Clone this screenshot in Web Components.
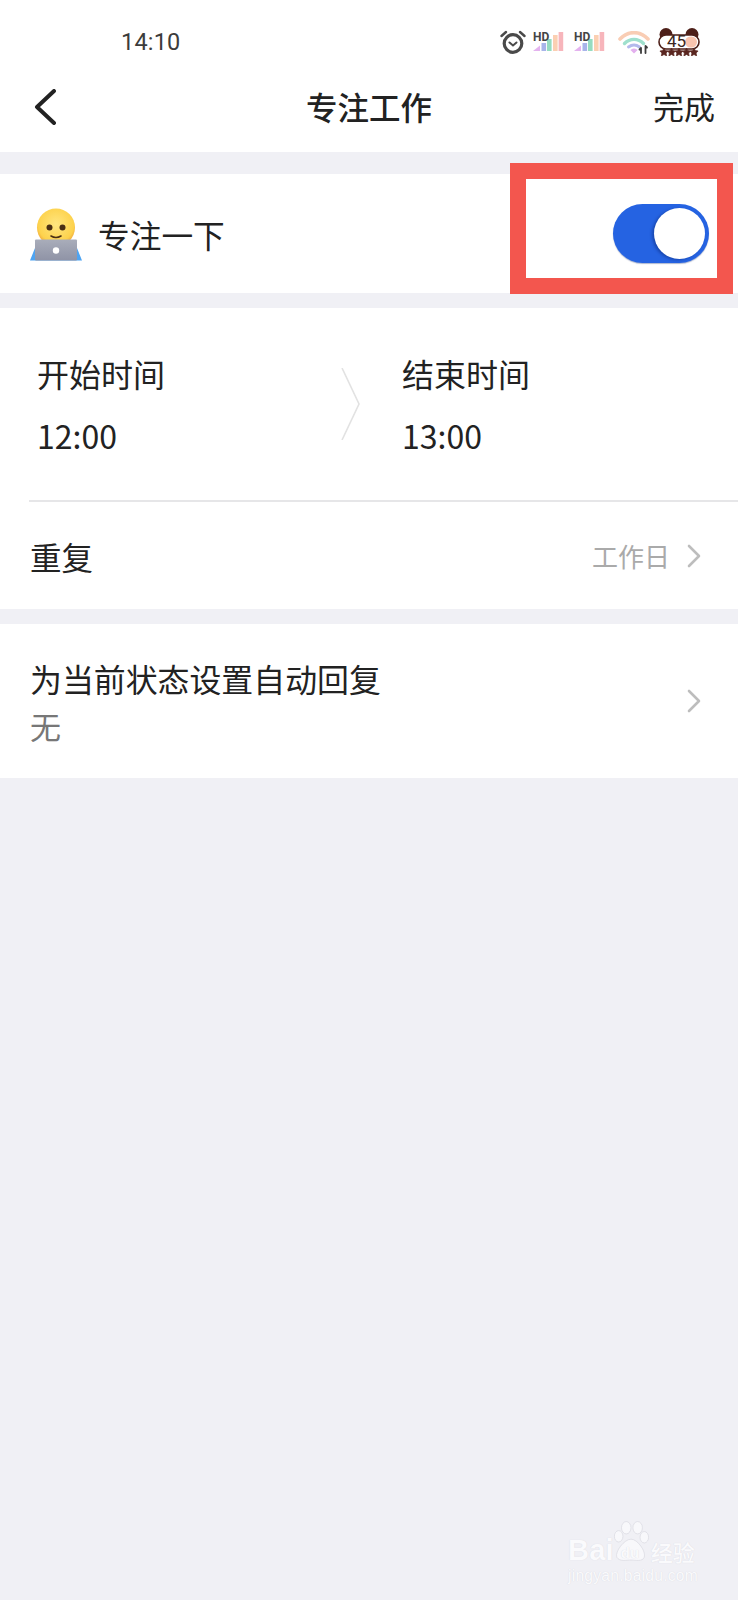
<!DOCTYPE html>
<html lang="zh">
<head>
<meta charset="utf-8">
<title>专注工作</title>
<style>
  html, body { margin: 0; padding: 0; background: #f0f0f5; }
  body { font-family: "Noto Sans CJK SC", "Noto Sans", sans-serif; color: #222; }
</style>
</head>
<body>
<focus-page>
  <status-bar time="14:10"></status-bar>
  <nav-bar title="专注工作" action="完成"></nav-bar>
  <focus-row label="专注一下"></focus-row>
  <time-range start="12:00" end="13:00"></time-range>
  <repeat-row label="重复" value="工作日"></repeat-row>
  <reply-row label="为当前状态设置自动回复" value="无"></reply-row>
  <baidu-mark></baidu-mark>
</focus-page>

<script>
class FocusPage extends HTMLElement {
  constructor() {
    super();
    this.attachShadow({ mode: 'open' });
    this.shadowRoot.innerHTML = `
      <style>
        :host { display: block; position: relative; height: 1600px; overflow: hidden; background: #f0f0f5; }
      </style>
      <slot></slot>
    `;
  }
}

class StatusBar extends HTMLElement {
  constructor() {
    super();
    this.attachShadow({ mode: 'open' });
    const signal = `
      <svg width="31" height="22" viewBox="0 0 31 22">
        <path d="M0 20 L7 14.5 V20 Z" fill="#e4b3ef"/>
        <rect x="8.5" y="12" width="4.6" height="8" fill="#a8b4ea"/>
        <rect x="14" y="8" width="4.6" height="12" fill="#95dcc0"/>
        <rect x="20" y="4" width="4.6" height="16" fill="#fbcfb2"/>
        <rect x="25.6" y="1" width="4.6" height="19" fill="#f7b5bb"/>
        <text x="0" y="9.5" font-family="Roboto, sans-serif" font-size="12" font-weight="700" fill="#444">HD</text>
      </svg>`;
    const star = 'l1.3 2.6 2.8 .4 -2 2 .5 2.9 -2.6 -1.4 -2.6 1.4 .5 -2.9 -2 -2 2.8 -.4 z';
    this.shadowRoot.innerHTML = `
      <style>
        :host { display: flex; align-items: center; height: 40px; padding: 22px 38px 0 121px; background: #fff; }
        .time { flex: 1; font: 400 23.5px/44px Roboto, sans-serif; color: #3c3c3c; letter-spacing: 0.2px; }
        svg { display: block; flex: none; }
        .sig { margin-left: 7px; display: flex; }
        .sig + .sig { margin-left: 10px; }
        .wifi { margin-left: 13px; }
        .badge { position: relative; margin-left: 8px; width: 42px; height: 28px; }
        .badge span { position: absolute; left: 9px; top: 5px; font: 400 17px/17px Roboto, sans-serif; color: #3a2620; }
      </style>
      <span class="time">${this.getAttribute('time')}</span>
      <svg width="26" height="24" viewBox="0 0 26 24" fill="none" stroke="#4a4a4a">
        <circle cx="13" cy="13.5" r="8.8" stroke-width="3.2"/>
        <path d="M9.5 12.5 L13 15.5 L16.5 12.5" stroke-width="2" stroke-linecap="round"/>
        <path d="M1.5 6 L6 2 M24.5 6 L20 2" stroke-width="2.4" stroke-linecap="round"/>
      </svg>
      <span class="sig">${signal}</span>
      <span class="sig">${signal}</span>
      <svg class="wifi" width="32" height="23" viewBox="0 0 32 23" fill="none" stroke-linecap="round">
        <path d="M2 8 C10 -0.5 22 -0.5 30 8" stroke="#f9cdb4" stroke-width="3.6"/>
        <path d="M6.5 12.5 C12 7 20 7 25.5 12.5" stroke="#9fe0cd" stroke-width="3.4"/>
        <path d="M10.5 16 C14 13.5 18 13.5 21.5 16" stroke="#b4b9ec" stroke-width="3"/>
        <path d="M13.5 19 L16 21.5 L18.5 19 C17 18 15 18 13.5 19 Z" fill="#e3b0ee" stroke="#e3b0ee" stroke-width="1.4"/>
        <path d="M23 22 V17 M27.5 22 V15 M21.5 18.5 L23 17 M27.5 15 L29 16.5" stroke="#3c3c3c" stroke-width="1.8"/>
      </svg>
      <span class="badge">
        <svg width="42" height="28" viewBox="0 0 42 28">
          <circle cx="8" cy="6.5" r="6.5" fill="#4d1f18"/>
          <circle cx="34" cy="6.5" r="6.5" fill="#4d1f18"/>
          <rect x="1" y="7" width="40" height="14" rx="7" fill="#fff" stroke="#4d1f18" stroke-width="1.6"/>
          <rect x="27" y="8.5" width="12" height="11" rx="5.5" fill="#f9c4ae"/>
          <g fill="#5a2620" stroke="#5a2620" stroke-width="0.7">
            <path d="M6 20 ${star}"/>
            <path d="M13.5 20 ${star}"/>
            <path d="M21 20 ${star}"/>
            <path d="M28.5 20 ${star}"/>
            <path d="M36 20 ${star}"/>
          </g>
        </svg>
        <span>45</span>
      </span>
    `;
  }
}

class NavBar extends HTMLElement {
  constructor() {
    super();
    this.attachShadow({ mode: 'open' });
    this.shadowRoot.innerHTML = `
      <style>
        :host { display: grid; grid-template-columns: 1fr auto 1fr; align-items: center; height: 88px; padding: 0 23px 2px; background: #fff; margin-bottom: 22px; }
        svg { display: block; margin: 2px 0 0 11px; }
        h1 { margin: 0; font-size: 31.5px; line-height: 46px; font-weight: 500; color: #222; }
        span { justify-self: end; font-size: 31px; line-height: 46px; color: #222; }
      </style>
      <svg width="22" height="36" viewBox="0 0 22 36" fill="none" stroke="#222" stroke-width="4" stroke-linecap="round" stroke-linejoin="round">
        <path d="M20 2 L3 18 L20 34"/>
      </svg>
      <h1>${this.getAttribute('title')}</h1>
      <span>${this.getAttribute('action')}</span>
    `;
  }
}

class FocusRow extends HTMLElement {
  constructor() {
    super();
    this.attachShadow({ mode: 'open' });
    this.shadowRoot.innerHTML = `
      <style>
        :host { display: flex; align-items: center; height: 119px; padding: 0 29px; background: #fff; margin-bottom: 15px; position: relative; }
        .label { flex: 1; margin-left: 15px; font-size: 31.7px; line-height: 44px; color: #222; }
        svg { display: block; flex: none; }
        .mark { position: absolute; top: -11px; right: 5px; width: 191px; height: 99px; border: 16px solid #f3564e; }
        .switch { position: relative; width: 96px; height: 59px; border-radius: 30px; background: #2563e2; flex: none; box-shadow: 0 1px 1px rgba(20, 50, 120, 0.35); }
        .knob { position: absolute; top: 4px; right: 4px; width: 51px; height: 51px; border-radius: 50%; background: #fff; box-shadow: -2px 1px 3px rgba(0, 20, 80, 0.35); }
      </style>
      <svg width="54" height="54" viewBox="0 0 54 54">
        <defs>
          <radialGradient id="face" cx="50%" cy="42%" r="55%">
            <stop offset="0" stop-color="#ffe680"/>
            <stop offset="0.85" stop-color="#fdd24c"/>
            <stop offset="1" stop-color="#f2b040"/>
          </radialGradient>
          <linearGradient id="lap" x1="0" y1="0" x2="0" y2="1">
            <stop offset="0" stop-color="#a9adba"/>
            <stop offset="1" stop-color="#8f93a6"/>
          </linearGradient>
        </defs>
        <path d="M1 53.5 L6 41 H48 L53 53.5 Z" fill="#4ea4f2"/>
        <circle cx="27" cy="20.5" r="19" fill="url(#face)"/>
        <circle cx="20.5" cy="20.5" r="3" fill="#4a2f14"/>
        <circle cx="33.5" cy="20.5" r="3" fill="#4a2f14"/>
        <path d="M22 29 Q27 32 32 29" fill="none" stroke="#4a2f14" stroke-width="1.6" stroke-linecap="round"/>
        <rect x="6" y="32.5" width="42" height="21" rx="1" fill="url(#lap)"/>
        <circle cx="27" cy="43.5" r="3.2" fill="#fff"/>
      </svg>
      <span class="label">${this.getAttribute('label')}</span>
      <div class="switch"><div class="knob"></div></div>
      <div class="mark"></div>
    `;
  }
}

class TimeRange extends HTMLElement {
  constructor() {
    super();
    this.attachShadow({ mode: 'open' });
    this.shadowRoot.innerHTML = `
      <style>
        :host { display: flex; align-items: flex-start; height: 194px; padding: 0 0 0 37px; background: #fff; position: relative; }
        :host::after { content: ""; position: absolute; left: 29px; right: 0; bottom: 0; height: 2px; background: #e6e6e8; }
        .col { display: flex; flex-direction: column; padding-top: 42px; }
        .name { font-size: 32px; line-height: 46px; color: #222; }
        .val { margin-top: 16px; font-size: 32px; line-height: 46px; color: #222; }
        svg { display: block; flex: none; margin: 60px 41px 0 176px; }
      </style>
      <div class="col">
        <span class="name">开始时间</span>
        <span class="val">${this.getAttribute('start')}</span>
      </div>
      <svg width="20" height="72" viewBox="0 0 20 72" fill="none" stroke="#e2e2e2" stroke-width="1.6">
        <path d="M1 0 L18 36 L1 72"/>
      </svg>
      <div class="col">
        <span class="name">结束时间</span>
        <span class="val">${this.getAttribute('end')}</span>
      </div>
    `;
  }
}

const chevron = `
  <svg width="14" height="24" viewBox="0 0 14 24" fill="none" stroke="#bdbdbd" stroke-width="2.6" stroke-linecap="round" stroke-linejoin="round">
    <path d="M2 2 L12 12 L2 22"/>
  </svg>`;

class RepeatRow extends HTMLElement {
  constructor() {
    super();
    this.attachShadow({ mode: 'open' });
    this.shadowRoot.innerHTML = `
      <style>
        :host { display: flex; align-items: center; height: 107px; padding: 0 37px 0 30px; background: #fff; margin-bottom: 15px; }
        .label { flex: 1; font-size: 31.5px; line-height: 44px; color: #222; }
        .value { font-size: 26px; line-height: 40px; color: #aaa; margin-right: 17px; }
        svg { display: block; flex: none; margin-top: 1px; }
      </style>
      <span class="label">${this.getAttribute('label')}</span>
      <span class="value">${this.getAttribute('value')}</span>
      ${chevron}
    `;
  }
}

class ReplyRow extends HTMLElement {
  constructor() {
    super();
    this.attachShadow({ mode: 'open' });
    this.shadowRoot.innerHTML = `
      <style>
        :host { display: flex; align-items: center; height: 154px; padding: 0 37px 0 30px; background: #fff; }
        .text { flex: 1; display: flex; flex-direction: column; }
        .label { font-size: 31.9px; line-height: 46px; color: #222; }
        .value { font-size: 31px; line-height: 44px; color: #777; margin-top: 3px; }
        svg { display: block; flex: none; }
      </style>
      <div class="text">
        <span class="label">${this.getAttribute('label')}</span>
        <span class="value">${this.getAttribute('value')}</span>
      </div>
      ${chevron}
    `;
  }
}

class BaiduMark extends HTMLElement {
  constructor() {
    super();
    this.attachShadow({ mode: 'open' });
    this.shadowRoot.innerHTML = `
      <style>
        :host { display: block; position: absolute; left: 568px; top: 1520px; width: 132px; height: 64px; color: #fafafc; text-shadow: 0 0 1px #d4d4dc; }
        .top { display: flex; align-items: flex-end; height: 44px; }
        .bai { font: 700 29px/28px "Liberation Sans", sans-serif; letter-spacing: 0.2px; }
        .paw { position: relative; width: 38px; height: 44px; flex: none; margin-left: -2px; }
        .paw svg { display: block; }
        .du { position: absolute; left: 9px; bottom: 3px; font: 700 15px/16px "Liberation Sans", sans-serif; color: #fafafc; }
        .cn { font-size: 22px; line-height: 26px; font-weight: 500; margin-left: 1px; white-space: nowrap; }
        .url { font: 400 15.6px/18px "Liberation Sans", sans-serif; letter-spacing: 0.25px; margin-top: 3px; white-space: nowrap; }
      </style>
      <div class="top">
        <span class="bai">Bai</span>
        <span class="paw">
          <svg width="38" height="44" viewBox="0 0 40 44" fill="#f8f8fb" stroke="#d8d8e0" stroke-width="0.7">
            <ellipse cx="7" cy="16" rx="4.5" ry="6"/>
            <ellipse cx="15" cy="7" rx="5" ry="6.5"/>
            <ellipse cx="27" cy="7" rx="5" ry="6.5"/>
            <ellipse cx="34" cy="17" rx="4.5" ry="6"/>
            <path d="M20 19 C27 19 36 32 34 38 C32 43 25 41 20 41 C15 41 8 43 5 38 C3 32 13 19 20 19 Z"/>
          </svg>
          <span class="du">du</span>
        </span>
        <span class="cn">经验</span>
      </div>
      <div class="url">jingyan.baidu.com</div>
    `;
  }
}

customElements.define('focus-page', FocusPage);
customElements.define('status-bar', StatusBar);
customElements.define('nav-bar', NavBar);
customElements.define('focus-row', FocusRow);
customElements.define('time-range', TimeRange);
customElements.define('repeat-row', RepeatRow);
customElements.define('reply-row', ReplyRow);
customElements.define('baidu-mark', BaiduMark);
</script>
</body>
</html>
